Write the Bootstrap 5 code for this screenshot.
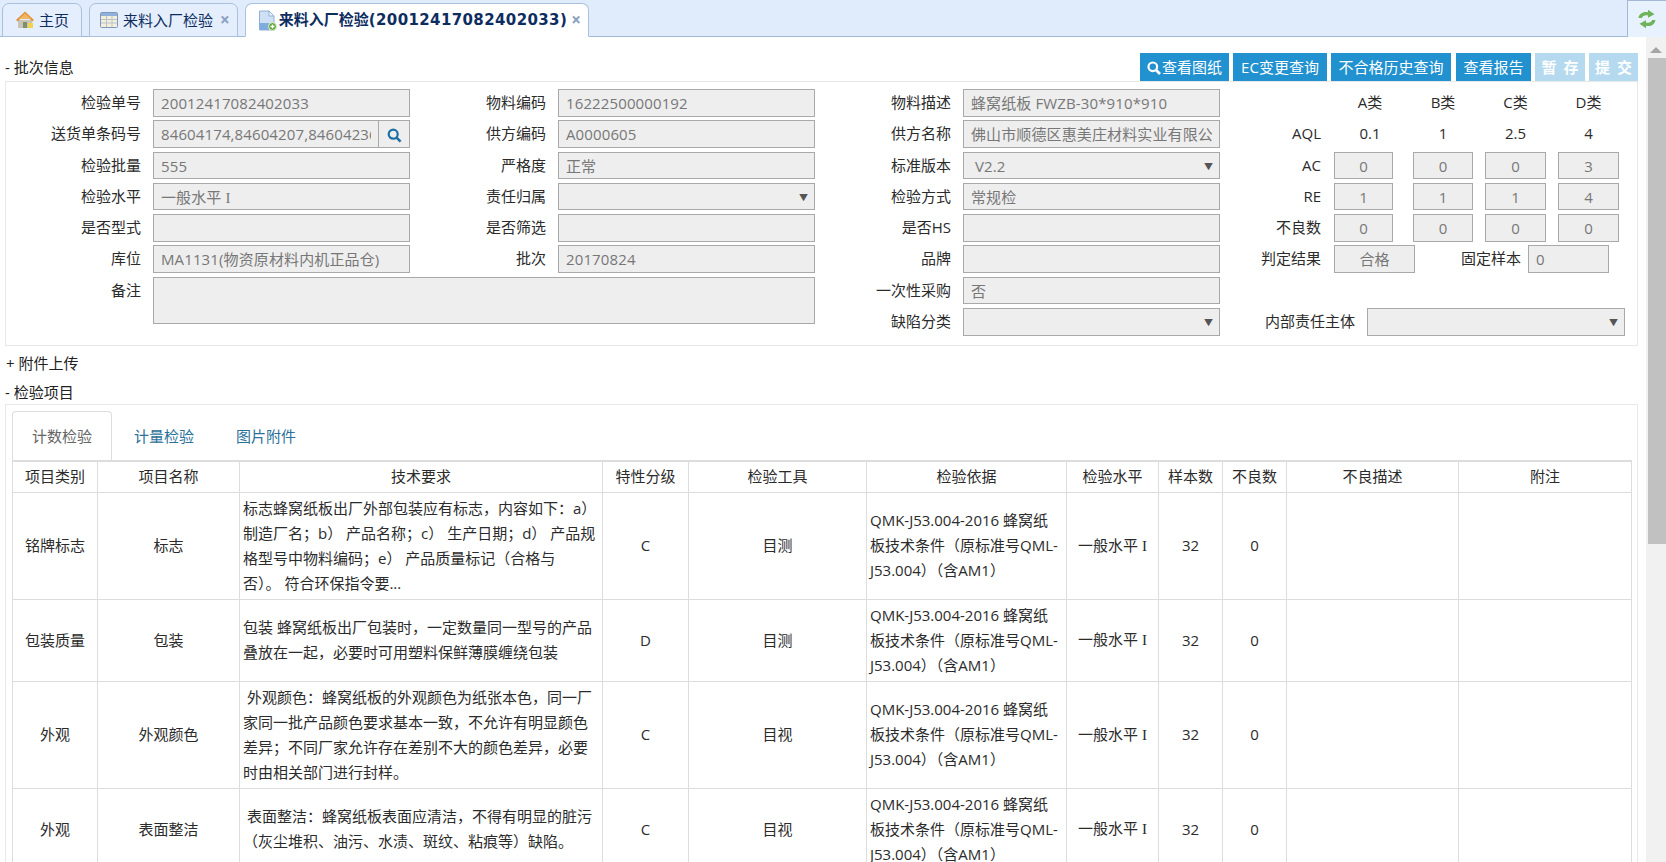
<!DOCTYPE html>
<html lang="zh-CN">
<head>
<meta charset="utf-8">
<title>来料入厂检验</title>
<link href="https://cdn.jsdelivr.net/npm/bootstrap@5.3.0/dist/css/bootstrap.min.css" rel="stylesheet">
<style>
html,body{height:862px;overflow:hidden}
body{font-family:"Open Sans","Noto Sans CJK SC",sans-serif;font-size:15px;color:#2b2b2b;background:#fff;line-height:25px}
.tabbar{height:37px;background:#e0ecfc;border-bottom:1px solid #a3b8d4;padding:3px 0 0 2px}
.tabitem{height:34px;margin-right:7px;background:#e4eefd;border:1px solid #a9c0de;border-radius:7px 7px 0 0;color:#0e2d5f;line-height:30px;white-space:nowrap}
.tabitem.on{background:#fff;border-bottom-color:#fff}
.tab-home{padding:0 12px 0 12px;gap:4px}
.tab-list{padding:0 7px 0 10px;gap:5px}
.tab-open{padding:0 7px 0 12px;gap:2px}
.tab-open b{font-family:"DejaVu Sans","Noto Sans CJK SC",sans-serif;font-weight:700;font-size:15px}
.tab-open b span{letter-spacing:.38px}
.tabx{color:#8aa0c0;font-size:17px;line-height:20px;font-weight:700;margin-left:2px}
.reload{width:39px;height:37px;margin-top:-3px;border-left:1px solid #a3b8d4;border-top:1px solid #a3b8d4;background:#e8f1fe}
.pagebody{height:825px}
.mainpane{width:1646px;overflow:hidden;padding:0 8px 0 5px}
.fakebar{width:20px;background:#f1f1f1}
.fakebar i{display:block;width:0;height:0;margin:10px auto 0;border:6px solid transparent;border-top:0;border-bottom:6px solid #a6a6a6}
.fakebar u{display:block;width:18px;height:486px;margin:5px 0 0 2px;background:#c1c1c1}
.headrow{height:44px;padding-top:16px}
.headrow span{line-height:28px;color:#222}
.actbtn{height:28px;padding:0;line-height:27px;border:0;border-radius:0;background:#2191d0;color:#fff;font-size:15px;white-space:nowrap;text-align:center}
.actbtn:disabled{background:#b5d9ee;color:#fff;opacity:1;word-spacing:3px;font-weight:600}
.actbtn svg{vertical-align:-2px;margin-right:1px}
.bw1{width:89px}.bw2{width:94px}.bw3{width:120px;margin-right:1px}.bw4{width:75px}.bw5{width:50px}.bw6{width:49px}
.box{border:1px solid #e8e8e8}
.infopanel{height:265px;padding-top:7px}
.formgrid{display:grid;grid-template-columns:147px 257px 148px 257px 148px 257px 1fr;grid-template-rows:repeat(8,27.5px);row-gap:3.8px}
.lbl{padding-right:12px;text-align:right;line-height:26px;color:#2b2b2b;white-space:nowrap}
.lbl-c5{grid-column:5}
.fld{display:block;height:100%;min-height:0;padding:0 7px;border:1px solid #a9a9a9;border-radius:0;background:#eee;color:#777;font-size:15px;line-height:26px;white-space:nowrap;overflow:hidden;letter-spacing:.12px}
.fld:focus{background:#eee}
.clipval{display:block;overflow:hidden}
.pick{padding-left:11px;padding-right:6px}
.fld em{font-style:normal;font-size:9px;color:#555;float:right;line-height:27px}
.memo{grid-column:2 / span 3;grid-row:7 / span 2;height:47px}
.lookup{width:32px;margin-left:-1px;border:1px solid #a9a9a9;background:#eee;padding:0;border-radius:0}
.qcside{grid-column:7;grid-row:1 / span 8;display:grid;grid-template-rows:repeat(8,27.5px);row-gap:3.8px}
.qrow{display:flex;align-items:stretch}
.qlab{width:101px;margin-right:13px;text-align:right;line-height:26px;white-space:nowrap}
.qa,.qb,.qc,.qd{text-align:center;line-height:27px}
.qa{width:59px;margin-right:20px}
.qb{width:60px;margin-right:12px}
.qc{width:61px;margin-right:12px}
.qd{width:61px}
.hshift{padding-left:13px}
.qrow .fld{padding:0;text-align:center}
.qwide{width:81px}
.qfix{width:106px;margin-right:7px;text-align:right;line-height:26px;white-space:nowrap}
.qrow .fld.leftval{padding-left:7px;text-align:left}
.qlong{width:135px;margin-right:12px;text-align:right;line-height:26px;white-space:nowrap}
.qsel{width:258px}
.qrow .fld.qsel{padding:0 6px 0 11px;text-align:left}
.romanone{font-family:"Liberation Serif",serif}
.fold{line-height:24px;margin-top:5px;color:#222}
.fold-plus{padding-left:1px}
.itempanel{padding:6px 6px 0;height:460px;overflow:hidden}
.subtabs{border:0;gap:2px;height:49px}
.subtabs .nav-link{width:100px;height:49px;padding:12px 0;text-align:center;color:#2b7199;border:1px solid transparent;border-bottom:0;border-radius:4px 4px 0 0;line-height:25px}
.subtabs .nav-link.active{color:#666;border-color:#ddd;background:#fff}
.qtable{table-layout:fixed;width:1619px;margin:0;font-size:15px;--bs-table-color:#2b2b2b;--bs-border-color:#ddd;border-color:#ddd}
.qtable th,.qtable td{padding:3px;line-height:25px;text-align:center;vertical-align:middle;font-weight:400;white-space:nowrap;overflow:hidden}
.qtable thead th{border-top:2px solid #ddd;height:31px;padding:1px 0}
.qtable td.leftcell{text-align:left;padding-right:0}
.qtable th:nth-child(1){width:85px}
.qtable th:nth-child(2){width:142px}
.qtable th:nth-child(3){width:363px}
.qtable th:nth-child(4){width:86px}
.qtable th:nth-child(5){width:178px}
.qtable th:nth-child(6){width:200px}
.qtable th:nth-child(7){width:92px}
.qtable th:nth-child(8){width:64px}
.qtable th:nth-child(9){width:64px}
.qtable th:nth-child(10){width:172px}
.qtable th:nth-child(11){width:173px}
.r2 td{height:82px}
.r1 td{height:106px}
.r3 td{height:107px}
</style>
</head>
<body>
<div class="tabbar d-flex">
  <div class="tabitem tab-home d-flex align-items-center">
    <svg width="20" height="20" viewBox="0 0 20 20"><path d="M3 10h14v8H3z" fill="#c9c4b4"/><path d="M10 1.500 1 10l1.500 1.500L10 4.600l7.500 6.900L19 10z" fill="#e3913a"/><path d="M10 3.500 4 9h12z" fill="#f0b565"/><path d="M8 12h4v6H8z" fill="#7d8f6e"/><path d="M13 13h5v5h-5z" fill="#f2d34f"/></svg>
    <span>主页</span>
  </div>
  <div class="tabitem tab-list d-flex align-items-center">
    <svg width="18" height="16" viewBox="0 0 18 16"><rect x=".5" y=".5" width="17" height="15" rx="1" fill="#f5efd8" stroke="#7c98bd"/><path d="M1 1h16v3H1z" fill="#8fb0d8"/><path d="M1 7.500h16M1 11h16M6.500 4v11M12 4v11" stroke="#b7c3cf"/></svg>
    <span>来料入厂检验</span><span class="tabx">×</span>
  </div>
  <div class="tabitem tab-open on d-flex align-items-center">
    <svg width="19" height="21" viewBox="0 0 19 21"><path d="M1.500 1h9.500l5 5v14h-14.500z" fill="#cfe0f4" stroke="#8fb0d4"/><path d="M11 1v5h5z" fill="#f0f6fd" stroke="#8fb0d4"/><path d="M2 13h14v7H2z" fill="#7eacdc"/><circle cx="14.500" cy="16.500" r="4" fill="#62a83c" stroke="#e8f3dd"/><path d="M14.500 14.500v4M12.500 16.500h4" stroke="#fff" stroke-width="1.300"/></svg>
    <b>来料入厂检验<span>(20012417082402033)</span></b><span class="tabx">×</span>
  </div>
  <div class="reload ms-auto d-flex align-items-center justify-content-center">
    <svg width="22" height="22" viewBox="0 0 22 22"><path d="M2.500 10C3 5.500 7.500 3 12 4.200V1.800l6.500 4.400-6.500 3.600V7.400C9 6.600 6.500 8 5.800 10z" fill="#6fb35a"/><path d="M19.500 12c-.5 4.500-5 7-9.500 5.800v2.400l-6.500-4.400 6.500-3.600v2.400c3 .8 5.500-.6 6.200-2.600z" fill="#6fb35a"/></svg>
  </div>
</div>
<div class="pagebody d-flex">
  <div class="mainpane">
    <div class="headrow d-flex justify-content-between">
      <span>- 批次信息</span>
      <div class="d-flex gap-1">
        <button class="btn actbtn bw1" type="button"><svg width="14" height="14" viewBox="0 0 14 14"><circle cx="5.800" cy="5.800" r="4.300" fill="none" stroke="#fff" stroke-width="2.200"/><path d="m9 9 4 4" stroke="#fff" stroke-width="2.600"/></svg>查看图纸</button>
        <button class="btn actbtn bw2" type="button">EC变更查询</button>
        <button class="btn actbtn bw3" type="button">不合格历史查询</button>
        <button class="btn actbtn bw4" type="button">查看报告</button>
        <button class="btn actbtn bw5" type="button" disabled>暂 存</button>
        <button class="btn actbtn bw6" type="button" disabled>提 交</button>
      </div>
    </div>
    <div class="box infopanel">
      <div class="formgrid">
        <div class="lbl">检验单号</div><div class="form-control fld">20012417082402033</div>
        <div class="lbl">物料编码</div><div class="form-control fld">16222500000192</div>
        <div class="lbl">物料描述</div><div class="form-control fld">蜂窝纸板 FWZB-30*910*910</div>
        <div class="qcside">
          <div class="qrow"><div class="qlab"></div><div class="qa hshift">A类</div><div class="qb">B类</div><div class="qc">C类</div><div class="qd">D类</div></div>
          <div class="qrow"><div class="qlab">AQL</div><div class="qa hshift">0.1</div><div class="qb">1</div><div class="qc">2.5</div><div class="qd">4</div></div>
          <div class="qrow"><div class="qlab">AC</div><div class="form-control fld qa">0</div><div class="form-control fld qb">0</div><div class="form-control fld qc">0</div><div class="form-control fld qd">3</div></div>
          <div class="qrow"><div class="qlab">RE</div><div class="form-control fld qa">1</div><div class="form-control fld qb">1</div><div class="form-control fld qc">1</div><div class="form-control fld qd">4</div></div>
          <div class="qrow"><div class="qlab">不良数</div><div class="form-control fld qa">0</div><div class="form-control fld qb">0</div><div class="form-control fld qc">0</div><div class="form-control fld qd">0</div></div>
          <div class="qrow"><div class="qlab">判定结果</div><div class="form-control fld qwide">合格</div><div class="qfix">固定样本</div><div class="form-control fld qwide leftval">0</div></div>
          <div class="qrow"></div>
          <div class="qrow"><div class="qlong">内部责任主体</div><div class="form-control fld qsel"><em>▼</em></div></div>
        </div>

        <div class="lbl">送货单条码号</div>
        <div class="d-flex">
          <div class="form-control fld flex-grow-1"><span class="clipval">84604174,84604207,84604236</span></div>
          <button class="btn lookup flex-shrink-0" type="button" aria-label="查询"><svg width="15" height="15" viewBox="0 0 15 15"><circle cx="6.200" cy="6.200" r="4.500" fill="none" stroke="#1d6fa5" stroke-width="2.200"/><path d="m9.600 9.600 4 4" stroke="#1d6fa5" stroke-width="2.600"/></svg></button>
        </div>
        <div class="lbl">供方编码</div><div class="form-control fld">A0000605</div>
        <div class="lbl">供方名称</div><div class="form-control fld"><span class="clipval">佛山市顺德区惠美庄材料实业有限公司</span></div>

        <div class="lbl">检验批量</div><div class="form-control fld">555</div>
        <div class="lbl">严格度</div><div class="form-control fld">正常</div>
        <div class="lbl">标准版本</div><div class="form-control fld pick"><em>▼</em>V2.2</div>

        <div class="lbl">检验水平</div><div class="form-control fld">一般水平 <span class="romanone">I</span></div>
        <div class="lbl">责任归属</div><div class="form-control fld pick"><em>▼</em></div>
        <div class="lbl">检验方式</div><div class="form-control fld">常规检</div>

        <div class="lbl">是否型式</div><div class="form-control fld"></div>
        <div class="lbl">是否筛选</div><div class="form-control fld"></div>
        <div class="lbl">是否HS</div><div class="form-control fld"></div>

        <div class="lbl">库位</div><div class="form-control fld">MA1131(物资原材料内机正品仓)</div>
        <div class="lbl">批次</div><div class="form-control fld">20170824</div>
        <div class="lbl">品牌</div><div class="form-control fld"></div>

        <div class="lbl">备注</div><div class="form-control fld memo"></div>
        <div class="lbl">一次性采购</div><div class="form-control fld">否</div>
        <div class="lbl lbl-c5">缺陷分类</div><div class="form-control fld pick"><em>▼</em></div>
      </div>
    </div>
    <div class="fold fold-plus">+ 附件上传</div>
    <div class="fold">- 检验项目</div>
    <div class="box itempanel">
      <ul class="nav nav-tabs subtabs">
        <li class="nav-item"><a class="nav-link active" href="#">计数检验</a></li>
        <li class="nav-item"><a class="nav-link" href="#">计量检验</a></li>
        <li class="nav-item"><a class="nav-link" href="#">图片附件</a></li>
      </ul>
      <table class="table table-bordered qtable">
        <thead>
          <tr><th>项目类别</th><th>项目名称</th><th>技术要求</th><th>特性分级</th><th>检验工具</th><th>检验依据</th><th>检验水平</th><th>样本数</th><th>不良数</th><th>不良描述</th><th>附注</th></tr>
        </thead>
        <tbody>
          <tr class="r1"><td>铭牌标志</td><td>标志</td><td class="leftcell">标志蜂窝纸板出厂外部包装应有标志，内容如下：a）<br>制造厂名；b） 产品名称；c） 生产日期；d） 产品规<br>格型号中物料编码；e） 产品质量标记（合格与<br>否）。 符合环保指令要...</td><td>C</td><td>目测</td><td class="leftcell">QMK-J53.004-2016 蜂窝纸<br>板技术条件（原标准号QML-<br>J53.004）（含AM1）</td><td>一般水平 <span class="romanone">I</span></td><td>32</td><td>0</td><td></td><td></td></tr>
          <tr class="r2"><td>包装质量</td><td>包装</td><td class="leftcell">包装 蜂窝纸板出厂包装时，一定数量同一型号的产品<br>叠放在一起，必要时可用塑料保鲜薄膜缠绕包装</td><td>D</td><td>目测</td><td class="leftcell">QMK-J53.004-2016 蜂窝纸<br>板技术条件（原标准号QML-<br>J53.004）（含AM1）</td><td>一般水平 <span class="romanone">I</span></td><td>32</td><td>0</td><td></td><td></td></tr>
          <tr class="r3"><td>外观</td><td>外观颜色</td><td class="leftcell">&nbsp;外观颜色：蜂窝纸板的外观颜色为纸张本色，同一厂<br>家同一批产品颜色要求基本一致，不允许有明显颜色<br>差异；不同厂家允许存在差别不大的颜色差异，必要<br>时由相关部门进行封样。</td><td>C</td><td>目视</td><td class="leftcell">QMK-J53.004-2016 蜂窝纸<br>板技术条件（原标准号QML-<br>J53.004）（含AM1）</td><td>一般水平 <span class="romanone">I</span></td><td>32</td><td>0</td><td></td><td></td></tr>
          <tr class="r2"><td>外观</td><td>表面整洁</td><td class="leftcell">&nbsp;表面整洁：蜂窝纸板表面应清洁，不得有明显的脏污<br>（灰尘堆积、油污、水渍、斑纹、粘痕等）缺陷。</td><td>C</td><td>目视</td><td class="leftcell">QMK-J53.004-2016 蜂窝纸<br>板技术条件（原标准号QML-<br>J53.004）（含AM1）</td><td>一般水平 <span class="romanone">I</span></td><td>32</td><td>0</td><td></td><td></td></tr>
        </tbody>
      </table>
    </div>
  </div>
  <div class="fakebar ms-auto"><i></i><u></u></div>
</div>
<script src="https://cdn.jsdelivr.net/npm/bootstrap@5.3.0/dist/js/bootstrap.bundle.min.js"></script>
</body>
</html>
